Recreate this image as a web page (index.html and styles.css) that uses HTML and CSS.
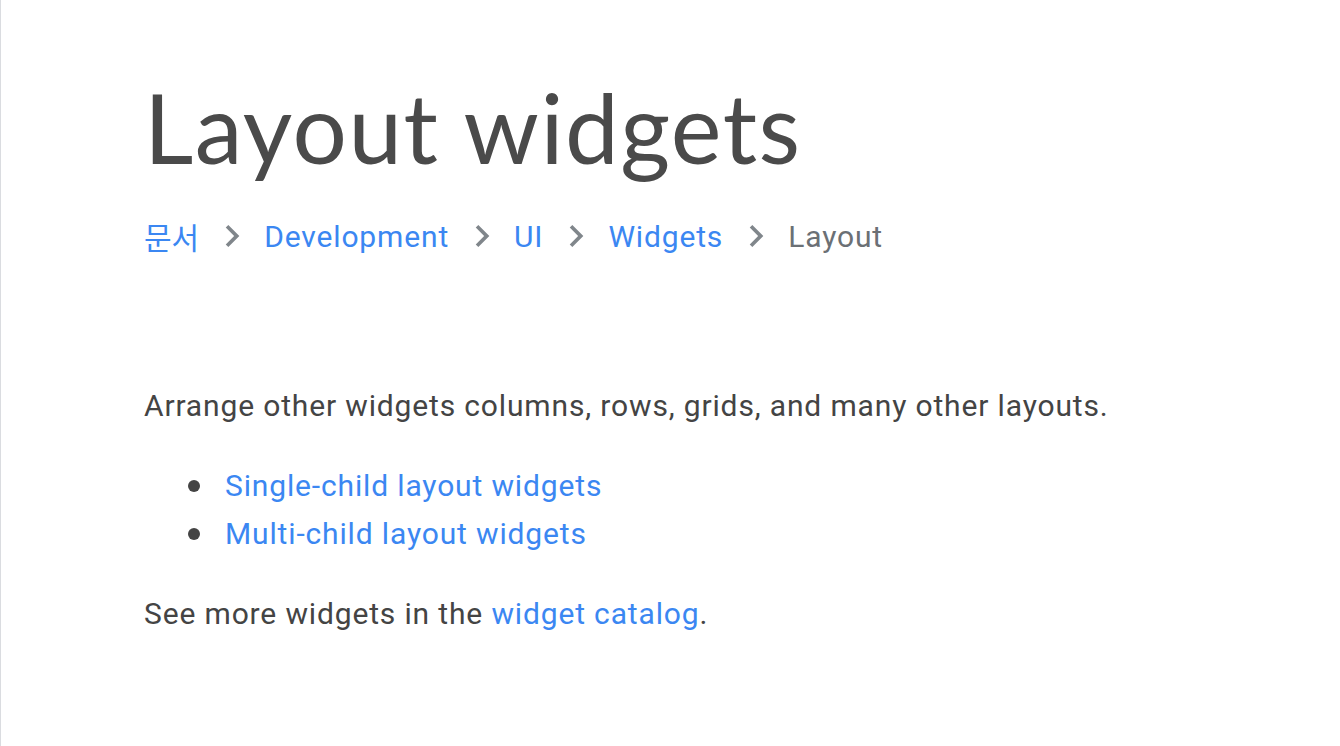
FILE: index.html
```html
<!DOCTYPE html>
<html lang="ko">
<head>
<meta charset="utf-8">
<title>Layout widgets</title>
<link rel="stylesheet" href="styles.css">
</head>
<body>
<main class="page">
  <h1 class="title">Layout widgets</h1>
  <nav class="crumbs">
    <a class="crumb ko" href="#">문서</a>
    <svg class="chev" viewBox="0 0 24 24"><path d="M10 6L8.59 7.41 13.17 12l-4.58 4.59L10 18l6-6z"/></svg>
    <a class="crumb" href="#">Development</a>
    <svg class="chev" viewBox="0 0 24 24"><path d="M10 6L8.59 7.41 13.17 12l-4.58 4.59L10 18l6-6z"/></svg>
    <a class="crumb" href="#">UI</a>
    <svg class="chev" viewBox="0 0 24 24"><path d="M10 6L8.59 7.41 13.17 12l-4.58 4.59L10 18l6-6z"/></svg>
    <a class="crumb" href="#">Widgets</a>
    <svg class="chev" viewBox="0 0 24 24"><path d="M10 6L8.59 7.41 13.17 12l-4.58 4.59L10 18l6-6z"/></svg>
    <span class="crumb current">Layout</span>
  </nav>
  <div class="body">
    <p class="para">Arrange other widgets columns, rows, grids, and many other layouts.</p>
    <ul class="list">
      <li><a href="#">Single-child layout widgets</a></li>
      <li><a href="#">Multi-child layout widgets</a></li>
    </ul>
    <p class="para">See more widgets in the <a href="#">widget catalog</a>.</p>
  </div>
</main>
</body>
</html>
```
FILE: styles.css
```css
html, body {
  margin: 0;
  padding: 0;
  background: #fff;
}
body {
  height: 746px;
  border-left: 1px solid #dadce0;
  box-sizing: border-box;
  font-family: Roboto, "Noto Sans CJK KR", sans-serif;
  color: #444;
}
.page {
  padding: 72px 0 0 143px;
}
.title {
  margin: 0;
  font-family: Lato, sans-serif;
  font-weight: 400;
  font-size: 96px;
  letter-spacing: 1.5px;
  line-height: 110px;
  color: #4a4a4a;
}
.crumbs {
  display: flex;
  align-items: center;
  margin-top: 32px;
  height: 44px;
}
.crumb {
  font-size: 30px;
  letter-spacing: 0.85px;
  color: #3b87f2;
  text-decoration: none;
  font-family: Roboto, "Noto Sans CJK KR", sans-serif;
}
.crumb.ko {
  letter-spacing: 0;
}
.crumb.current {
  color: #6b7075;
}
.chev {
  width: 44px;
  height: 44px;
  fill: #80868b;
  margin: 0 10px 0 11px;
  flex: none;
}
.body {
  padding-top: 124px;
}
.para {
  margin: 0;
  font-size: 30px;
  letter-spacing: 0.85px;
  line-height: 48px;
}
.para a, .list a {
  color: #3b87f2;
  text-decoration: none;
}
.list {
  list-style: none;
  margin: 32px 0;
  padding-left: 44px;
  font-size: 30px;
  letter-spacing: 0.85px;
  line-height: 48px;
}
.list li {
  display: flex;
  align-items: center;
}
.list li::before {
  content: "";
  width: 12px;
  height: 12px;
  border-radius: 50%;
  background: #444;
  margin-right: 25px;
  flex: none;
}
```
